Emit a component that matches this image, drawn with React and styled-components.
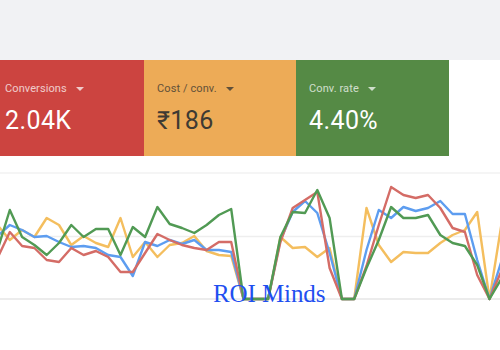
import styled, { createGlobalStyle } from "styled-components";

const Global = createGlobalStyle`
  html, body {
    margin: 0;
    padding: 0;
    background: #ffffff;
    font-family: Roboto, "Noto Sans", "DejaVu Sans", sans-serif;
  }
`;

const Page = styled.div`
  width: 500px;
  height: 350px;
  overflow: hidden;
  display: flex;
  flex-direction: column;
`;

const TopBar = styled.div`
  height: 60px;
  flex-shrink: 0;
  background: #f1f2f4;
`;

const CardRow = styled.div`
  display: flex;
  flex-shrink: 0;
  margin-left: -8px;
`;

const Card = styled.div`
  width: 152px;
  height: 96px;
  box-sizing: border-box;
  padding: 22px 0 0 13px;
  background: ${(p) => p.$bg};
  color: ${(p) => p.$fg};
  display: flex;
  flex-direction: column;
  gap: 11px;
  &:last-child {
    width: 153px;
  }
`;

const Label = styled.div`
  display: flex;
  align-items: center;
  gap: 9px;
  font-size: 11px;
  letter-spacing: 0.1px;
  opacity: ${(p) => p.$dim};
`;

const Caret = styled.span`
  width: 0;
  height: 0;
  border-left: 4px solid transparent;
  border-right: 4px solid transparent;
  border-top: 4px solid currentColor;
`;

const Value = styled.div`
  font-size: 25px;
  line-height: 30px;
  letter-spacing: 0.4px;
`;

const ChartWrap = styled.div`
  position: relative;
  flex: 1;
  svg {
    display: block;
  }
`;

const Watermark = styled.div`
  position: absolute;
  left: 213px;
  top: 124px;
  font-family: "Liberation Serif", "Times New Roman", serif;
  font-size: 25px;
  line-height: 28px;
  color: #1f4ff0;
  letter-spacing: -0.1px;
`;

const cards = [
  { label: "Conversions", value: "2.04K", bg: "#cc4440", fg: "#ffffff", dim: 0.72 },
  { label: "Cost / conv.", value: "₹186", bg: "#edab57", fg: "#3e3a33", dim: 0.8 },
  { label: "Conv. rate", value: "4.40%", bg: "#558a45", fg: "#ffffff", dim: 0.72 },
];

const series = [
  {
    color: "#f4be5e",
    ys: [225, 240, 230, 237, 218, 225, 245, 236, 243, 247, 218, 257, 242, 257, 245, 243, 236, 251, 255, 256, 299, 299, 299, 237, 248, 247, 257, 248, 299, 299, 208, 245, 262, 252, 253, 253, 243, 235, 230, 212, 299, 222],
  },
  {
    color: "#5d9df0",
    ys: [236, 225, 230, 237, 236, 242, 247, 246, 248, 255, 257, 276, 242, 246, 240, 244, 240, 250, 250, 252, 299, 299, 299, 240, 212, 201, 213, 253, 299, 299, 250, 210, 218, 207, 211, 208, 201, 214, 214, 260, 299, 260],
  },
  {
    color: "#d46c66",
    ys: [258, 232, 246, 248, 260, 262, 248, 255, 251, 257, 272, 272, 253, 234, 240, 245, 248, 250, 242, 242, 299, 299, 299, 242, 208, 200, 192, 268, 299, 299, 266, 225, 187, 195, 198, 195, 208, 228, 232, 275, 299, 270],
  },
  {
    color: "#519a54",
    ys: [250, 210, 237, 245, 255, 243, 225, 237, 229, 229, 255, 227, 237, 207, 224, 228, 233, 225, 215, 209, 299, 299, 299, 237, 212, 213, 190, 218, 299, 299, 268, 240, 207, 218, 218, 215, 235, 243, 246, 265, 299, 278],
  },
];

const TOP = 156;
const xAt = (i) => -2.5 + 12.3 * i;

const Chart = () => (
  <svg width="500" height="194" viewBox="0 0 500 194">
    <line x1="0" x2="500" y1={173 - TOP} y2={173 - TOP} stroke="#f2f2f2" strokeWidth="1.5" />
    <line x1="0" x2="500" y1={236.5 - TOP} y2={236.5 - TOP} stroke="#eeeeee" strokeWidth="1.5" />
    <line x1="0" x2="500" y1={299 - TOP} y2={299 - TOP} stroke="#e6e6e6" strokeWidth="1.5" />
    {series.map((s, k) => (
      <polyline
        key={k}
        fill="none"
        stroke={s.color}
        strokeWidth="2.4"
        strokeLinejoin="round"
        points={s.ys.map((y, i) => `${xAt(i)},${y - TOP}`).join(" ")}
      />
    ))}
  </svg>
);

export default function App() {
  return (
    <Page>
      <Global />
      <TopBar />
      <CardRow>
        {cards.map((c) => (
          <Card key={c.label} $bg={c.bg} $fg={c.fg}>
            <Label $dim={c.dim}>
              {c.label}
              <Caret />
            </Label>
            <Value>{c.value}</Value>
          </Card>
        ))}
      </CardRow>
      <ChartWrap>
        <Chart />
        <Watermark>ROI Minds</Watermark>
      </ChartWrap>
    </Page>
  );
}
